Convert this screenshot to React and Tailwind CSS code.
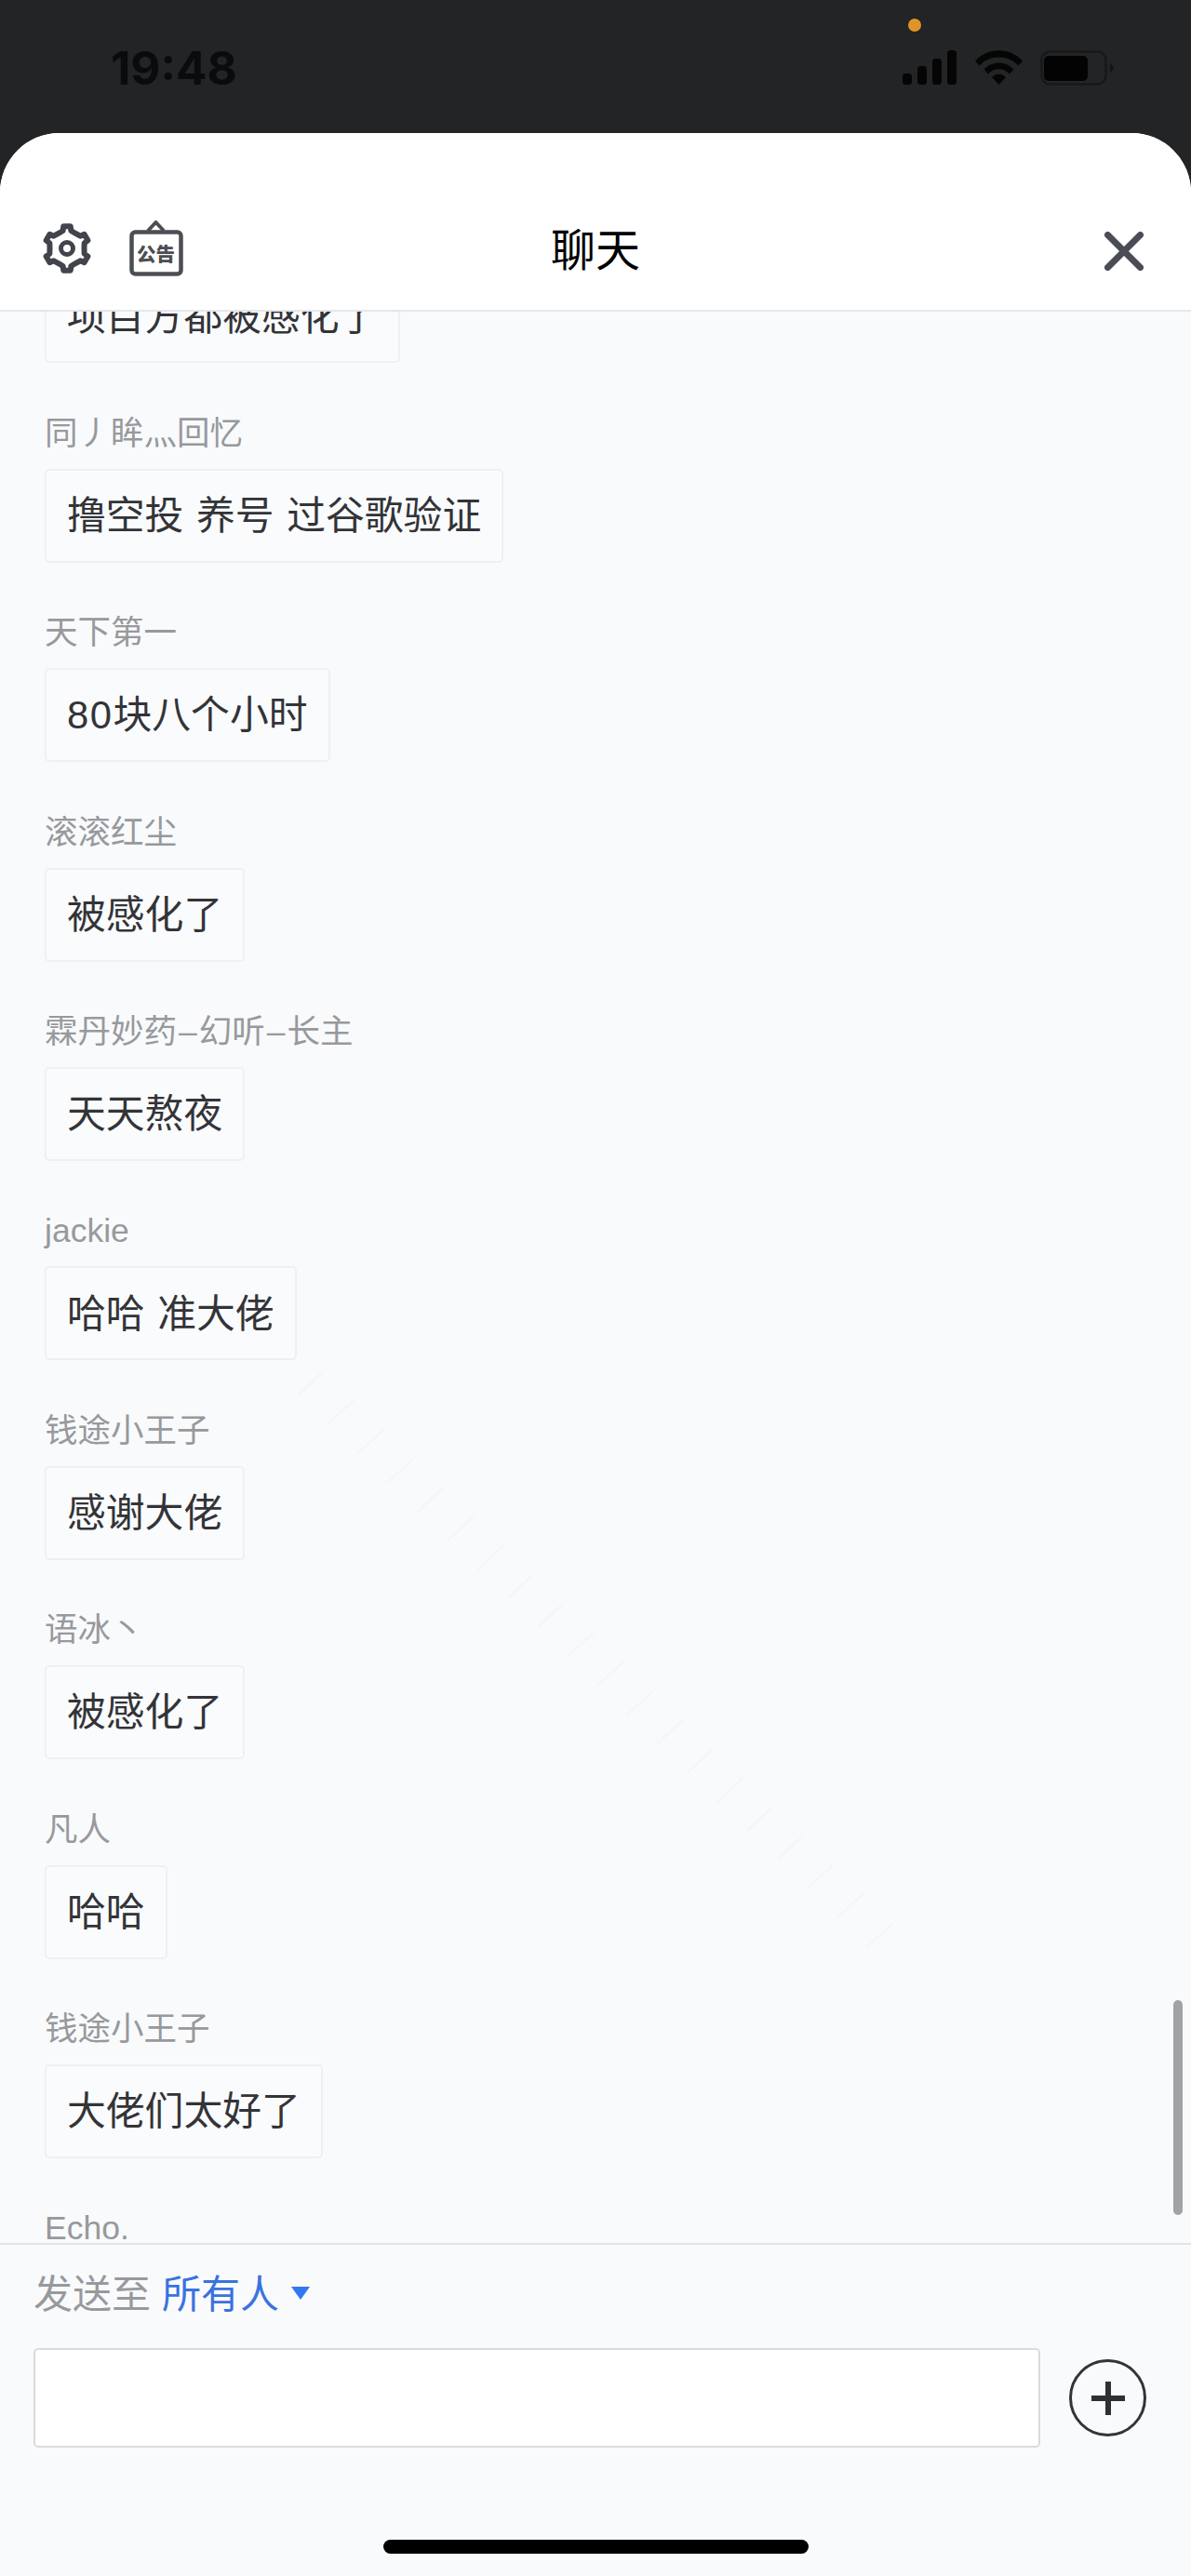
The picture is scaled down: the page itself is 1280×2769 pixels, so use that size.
const FONT = "font-['Liberation_Sans','Noto_Sans_CJK_SC',sans-serif]";

const messages = [
  { name: '同丿眸灬回忆', text: '撸空投 养号 过谷歌验证' },
  { name: '天下第一', text: <><span className="tracking-[1.5px]">80</span>块八个小时</> },
  { name: '滚滚红尘', text: '被感化了' },
  { name: <>霖丹妙药<span className="mx-[2px]">–</span>幻听<span className="mx-[2px]">–</span>长主</>, text: '天天熬夜' },
  { name: 'jackie', text: '哈哈 准大佬' },
  { name: '钱途小王子', text: '感谢大佬' },
  { name: '语冰丶', text: '被感化了' },
  { name: '凡人', text: '哈哈' },
  { name: '钱途小王子', text: '大佬们太好了' },
];

function gearPath() {
  const pts = [];
  for (let k = 0; k < 6; k++) {
    const a = -90 + k * 60;
    [[-30, 18.5], [-13, 19.5], [-9, 24], [9, 24], [13, 19.5]].forEach(([d, r]) => {
      const t = ((a + d) * Math.PI) / 180;
      pts.push(`${(27 + r * Math.cos(t)).toFixed(2)} ${(27 + r * Math.sin(t)).toFixed(2)}`);
    });
  }
  return `M${pts.join('L')}Z`;
}

function GearIcon() {
  return (
    <svg width="54" height="54" viewBox="0 0 54 54" fill="none" stroke="#42444c" strokeWidth="6" strokeLinejoin="round">
      <path d={gearPath()} />
      <circle cx="27" cy="27" r="6.5" strokeWidth="5" />
    </svg>
  );
}

function NoticeIcon() {
  return (
    <svg width="58" height="60" viewBox="0 0 58 60">
      <path d="M20 11 L28.5 2 L37 11" fill="none" stroke="#4c4e54" strokeWidth="4" strokeLinejoin="round" />
      <rect x="2.5" y="12.5" width="53" height="45" rx="4" fill="#fff" stroke="#4c4e54" strokeWidth="4.5" />
      <text x="28.5" y="44" textAnchor="middle" fontSize="20.5" fontWeight="900" fill="#4c4e54" fontFamily="'Noto Sans CJK SC', sans-serif">公告</text>
    </svg>
  );
}

function SignalIcon() {
  return (
    <svg width="58" height="37" viewBox="0 0 58 37" fill="#050505">
      <rect x="0" y="25" width="10" height="12" rx="3.5" />
      <rect x="16" y="17" width="10" height="20" rx="3.5" />
      <rect x="32" y="9" width="10" height="28" rx="3.5" />
      <rect x="48" y="0" width="10" height="37" rx="3.5" />
    </svg>
  );
}

function WifiIcon() {
  return (
    <svg width="51" height="37" viewBox="0 0 51 37" fill="#050505">
      <path d="M0 11.5 C14 -3.5 37 -3.5 51 11.5 L46.5 16.5 C35 4.5 16 4.5 4.5 16.5 Z" />
      <path d="M9.5 20.5 C18.5 11 32.5 11 41.5 20.5 L37 25.5 C30.5 18.5 20.5 18.5 14 25.5 Z" />
      <path d="M18 29 C22.5 24.5 28.5 24.5 33 29 L25.5 37 Z" />
    </svg>
  );
}

function BatteryIcon() {
  return (
    <svg width="80" height="38" viewBox="0 0 80 38">
      <rect x="1.5" y="1.5" width="69" height="35" rx="9" fill="none" stroke="#17181a" strokeWidth="2.5" />
      <rect x="4" y="6" width="47" height="27" rx="5" fill="#030303" />
      <path d="M75 13 L79 19 L75 25 Z" fill="#121314" />
    </svg>
  );
}

function Watermark() {
  const dashes = Array.from({ length: 20 }, (_, i) => i);
  return (
    <svg className="absolute left-0 top-0 pointer-events-none" width="1280" height="2076" viewBox="0 0 1280 2076">
      {dashes.map((i) => {
        const x = 320 + i * 32.2;
        const y = 1165 + i * 31.2;
        return <line key={i} x1={x} y1={y} x2={x + 28} y2={y - 26} stroke="#f5f6f8" strokeWidth="2.5" />;
      })}
    </svg>
  );
}

function Bubble({ text }) {
  return (
    <div className="h-[101px] w-fit flex items-center pt-[2px] px-[22px] bg-[#fafbfd] border-2 border-[#eff0f2] rounded-[5px] text-[41.8px] text-[#333437] whitespace-pre [word-spacing:2px]">
      <span>{text}</span>
    </div>
  );
}

function Message({ name, text }) {
  return (
    <div className="flex flex-col items-start">
      <div className="h-[50px] mb-[13px] text-[35.5px] leading-[50px] text-[#97999c] whitespace-pre">{name}</div>
      <Bubble text={text} />
    </div>
  );
}

export default function App() {
  return (
    <div className={`w-[1280px] h-[2769px] flex flex-col bg-[#222426] overflow-hidden ${FONT}`}>
      <div className="h-[143px] shrink-0 relative flex justify-between items-start">
        <div className="ml-[119px] mt-[44px] text-[49.5px] leading-[58px] font-['Inter'] font-bold text-[#0a0b0c]">19:48</div>
        <div className="absolute left-[976px] top-[20px] w-[14px] h-[14px] rounded-full bg-[#e09428]"></div>
        <div className="mr-[82px] mt-[54px] flex items-start">
          <SignalIcon />
          <div className="ml-[20px]"><WifiIcon /></div>
          <div className="ml-[19px]"><BatteryIcon /></div>
        </div>
      </div>

      <div className="flex-1 flex flex-col min-h-0 rounded-t-[64px] overflow-hidden bg-white">
        <header className="h-[192px] shrink-0 relative flex items-end justify-between pl-[45px] pr-[51px] pb-[36px] bg-white border-b-2 border-[#e6e7e9] z-10">
          <div className="flex items-center gap-[40px]">
            <GearIcon />
            <NoticeIcon />
          </div>
          <h1 className="absolute left-0 right-0 top-[96px] text-center text-[48px] leading-[62px] font-normal text-black">聊天</h1>
          <svg className="mb-[6px]" width="42" height="42" viewBox="0 0 42 42" stroke="#4a4d57" strokeWidth="7" strokeLinecap="round">
            <path d="M3.5 3.5 L38.5 38.5 M38.5 3.5 L3.5 38.5" />
          </svg>
        </header>

        <div className="flex-1 min-h-0 relative overflow-hidden bg-[#f9fafc]">
          <div className="pl-[48px] -mt-[45.6px] flex flex-col gap-[50.4px]">
            <Bubble text="项目方都被感化了" />
            {messages.map((m, i) => (
              <Message key={i} name={m.name} text={m.text} />
            ))}
            <div className="h-[50px] text-[35.5px] leading-[50px] text-[#97999c]">Echo.</div>
          </div>
          <Watermark />
          <div className="absolute right-[9px] top-[1815px] w-[10px] h-[231px] rounded-full bg-[#a1a3a5]"></div>
        </div>

        <footer className="h-[358px] shrink-0 relative bg-[#f9fafc] border-t-2 border-[#e2e4e7] pl-[36px] pr-[48px] pt-[24px]">
          <div className="flex items-center h-[60px] text-[42px] leading-[60px]">
            <span className="text-[#97999c]">发送至</span>
            <span className="ml-[12px] text-[#3a72e0]">所有人</span>
            <span className="ml-[13px] -mt-[4px] w-0 h-0 border-x-[10px] border-x-transparent border-t-[14px] border-t-[#3278f0]"></span>
          </div>
          <div className="mt-[27px] flex items-center">
            <div className="w-[1082px] h-[107px] bg-white border-2 border-[#d9dbdd] rounded-[5px]"></div>
            <div className="ml-[31px] w-[83px] h-[83px] rounded-full border-[3px] border-[#333436] flex items-center justify-center">
              <svg width="36" height="36" viewBox="0 0 36 36" stroke="#2f3032" strokeWidth="6">
                <path d="M0 18 H36 M18 0 V36" />
              </svg>
            </div>
          </div>
          <div className="absolute left-[412px] bottom-[24px] w-[457px] h-[15px] rounded-full bg-black"></div>
        </footer>
      </div>
    </div>
  );
}
